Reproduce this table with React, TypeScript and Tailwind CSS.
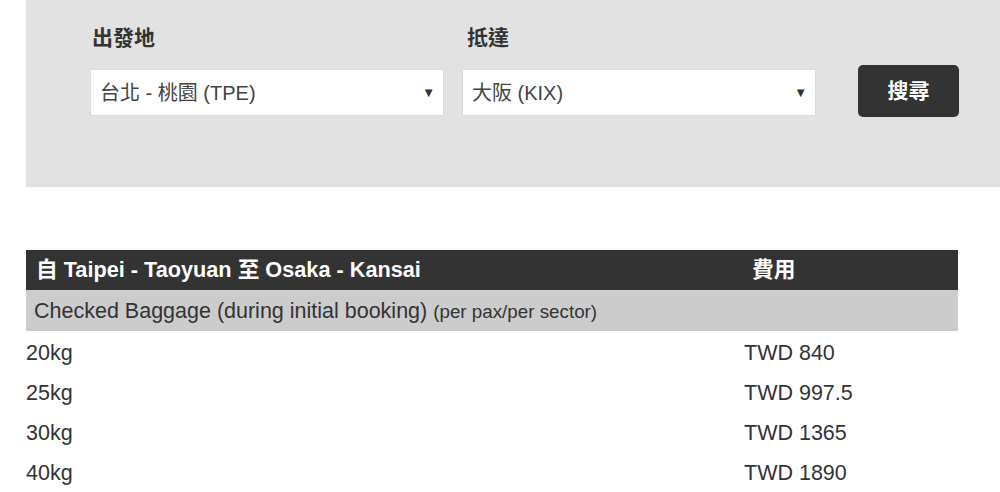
const font = { fontFamily: '"Liberation Sans", Arial, "Noto Sans CJK TC", sans-serif' };

const rows = [
  { weight: "20kg", price: "TWD 840" },
  { weight: "25kg", price: "TWD 997.5" },
  { weight: "30kg", price: "TWD 1365" },
  { weight: "40kg", price: "TWD 1890" },
];

function Select({ value }: { value: string }) {
  return (
    <div className="flex h-[47px] w-[354px] items-center justify-between border border-[#dcdcdc] bg-white pl-[9px] pr-[8px]">
      <span className="text-[20px] text-[#444]">{value}</span>
      <span className="text-[13px] text-[#333]">▼</span>
    </div>
  );
}

export default function App() {
  return (
    <div className="min-h-[492px] w-[1000px] overflow-hidden bg-white" style={font}>
      {/* Search panel */}
      <div className="ml-[26px] h-[187px] bg-[#e2e2e2] pl-[64px] pt-[24px]">
        <div className="flex items-end">
          <div className="flex flex-col">
            <label className="pl-[2px] text-[21px] font-bold leading-[28px] text-[#333]">出發地</label>
            <div className="mt-[17px]">
              <Select value="台北 - 桃園 (TPE)" />
            </div>
          </div>
          <div className="ml-[18px] flex flex-col">
            <label className="pl-[5px] text-[21px] font-bold leading-[28px] text-[#333]">抵達</label>
            <div className="mt-[17px]">
              <Select value="大阪 (KIX)" />
            </div>
          </div>
          <button className="mb-[-1px] ml-[42px] h-[52px] w-[101px] rounded-[5px] bg-[#333] text-[21px] font-bold text-white">
            搜尋
          </button>
        </div>
      </div>

      {/* Fees table */}
      <table className="ml-[26px] mt-[63px] w-[932px] border-collapse text-[21.5px] text-[#333]">
        <thead>
          <tr className="h-[40px] bg-[#333] text-left text-[21.7px] font-bold text-white">
            <th className="w-[717px] pl-[10px]">自 Taipei - Taoyuan 至 Osaka - Kansai</th>
            <th className="pl-[9px]">費用</th>
          </tr>
        </thead>
        <tbody>
          <tr className="h-[41px] bg-[#cccccc]">
            <td colSpan={2} className="pl-[8px] pt-[1px]">
              Checked Baggage (during initial booking){" "}
              <span className="text-[18.8px]">(per pax/per sector)</span>
            </td>
          </tr>
          {rows.map((row) => (
            <tr key={row.weight} className="h-[40px]">
              <td className="pt-[4px]">{row.weight}</td>
              <td className="pt-[4px] pl-[1px]">{row.price}</td>
            </tr>
          ))}
        </tbody>
      </table>
    </div>
  );
}
